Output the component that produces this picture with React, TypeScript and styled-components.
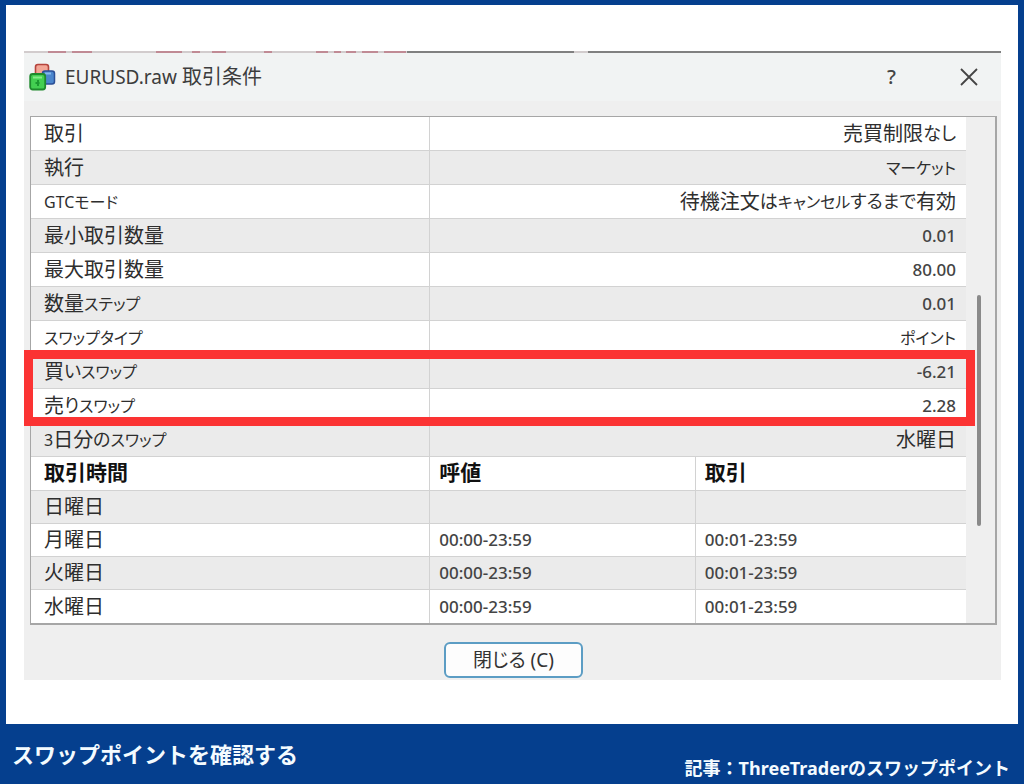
import React from "react";
import styled, { createGlobalStyle } from "styled-components";

const GlobalStyle = createGlobalStyle`
  *, *::before, *::after { box-sizing: border-box; }
  body { margin: 0; background: #053f8e; }
`;

const uiFont = `"Noto Sans", "Noto Sans CJK JP", sans-serif`;

const Page = styled.div`
  display: flex;
  flex-direction: column;
  min-height: 100vh;
  padding: 5px 6px 0;
  background: #053f8e;
  font-family: ${uiFont};
`;

const Sheet = styled.main`
  flex: 1;
  padding: 46px 17px 44px 18px;
  background: #fff;
`;

const Dialog = styled.section`
  display: flex;
  flex-direction: column;
  background: #efefef;
`;

const EdgeLine = styled.svg`
  display: block;
  width: 100%;
  height: 2px;
`;

const TitleBar = styled.header`
  display: flex;
  align-items: center;
  gap: 9px;
  height: 48px;
  padding: 0 14px 0 5px;
  background: #f1f3f3;
`;

const Title = styled.h1`
  flex: 1;
  margin: 0;
  font-size: 20px;
  font-weight: 400;
  line-height: 28px;
  color: #3c3c3c;
`;

const TitleSymbol = styled.span`
  font-size: 19px;
`;

const TitleActions = styled.div`
  display: flex;
  gap: 40px;
`;

const TitleButton = styled.button`
  display: grid;
  place-items: center;
  width: 37px;
  height: 36px;
  padding: 0;
  border: 0;
  background: none;
  color: #444;
  font: 500 20px/28px ${uiFont};
`;

const Pane = styled.div`
  position: relative;
  display: flex;
  margin: 15px 4px 0 6px;
  border: 1px solid #a6a6a6;
  border-right-width: 2px;
  border-bottom-width: 2px;
`;

const ConditionTable = styled.table`
  flex: 1;
  border-collapse: separate;
  border-spacing: 0;
  table-layout: fixed;
  background: #fff;
  font-size: 20px;
  line-height: 28px;
  color: #2e2e2e;
`;

const Row = styled.tr<{ $shaded?: boolean; $compact?: boolean }>`
  height: ${(p) => (p.$compact ? 33 : 34)}px;
  background: ${(p) => (p.$shaded ? "#ebebeb" : "#fff")};

  &:not(:last-child) > * {
    border-bottom: 1px solid #d2d2d2;
  }
`;

const Label = styled.th<{ $heading?: boolean }>`
  padding: 0 8px ${(p) => (p.$heading ? 4 : 0)}px 13px;
  text-align: left;
  white-space: nowrap;
  font-size: ${(p) => (p.$heading ? 21 : 20)}px;
  font-weight: ${(p) => (p.$heading ? 700 : 400)};
  color: ${(p) => (p.$heading ? "#111" : "inherit")};
  font-feature-settings: "palt";
`;

const Cell = styled.td<{ $align?: "left" | "right" }>`
  padding: 0 10px 0 9px;
  border-left: 1px solid #d2d2d2;
  text-align: ${(p) => p.$align ?? "left"};
  white-space: nowrap;
  font-feature-settings: "palt";
`;

const HeadingCell = styled(Label)`
  padding-left: 9px;
  border-left: 1px solid #d2d2d2;
`;

const Kana = styled.span<{ $hiragana?: boolean }>`
  font-size: ${(p) => (p.$hiragana ? 18 : 16)}px;
  line-height: 20px;
  vertical-align: 1px;
`;

const Numeric = styled.span`
  font-size: 17px;
  line-height: 20px;
  font-weight: 500;
  vertical-align: 1px;
  color: #444;
`;

const ScrollTrack = styled.div`
  width: 29px;
  padding: 178px 0 97px 11px;
  background: #efefef;
`;

const ScrollThumb = styled.div`
  width: 4px;
  height: 100%;
  border-radius: 2px;
  background: #8a8a8a;
`;

const Highlight = styled.div`
  position: absolute;
  top: 233px;
  left: -7px;
  right: 20px;
  height: 76px;
  border: 9px solid #fb3333;
  pointer-events: none;
`;

const Actions = styled.div`
  display: flex;
  justify-content: center;
  padding: 17px 0 2px 2px;
`;

const CloseButton = styled.button`
  width: 139px;
  height: 36px;
  padding: 0;
  border: 2px solid #5c9dc4;
  border-radius: 6px;
  background: #fdfdfd;
  color: #333;
  font: 400 19px/28px ${uiFont};
  font-feature-settings: "palt";
`;

const Caption = styled.footer`
  display: flex;
  justify-content: space-between;
  align-items: flex-start;
  height: 60px;
  padding: 0 8px 0 6px;
  color: #f4fbff;
  font-weight: 700;
`;

const CaptionTitle = styled.h2`
  margin: 0;
  padding-top: 14px;
  font-size: 22px;
  line-height: 32px;
`;

const CaptionSource = styled.p`
  margin: 0;
  padding-top: 30px;
  font-size: 18px;
  line-height: 28px;
`;

const SymbolIcon = () => (
  <svg width="27" height="28" viewBox="0 0 27 28" aria-hidden="true">
    <rect x="6.5" y="1.5" width="13" height="11" rx="2.5" fill="#f3a696" stroke="#b5443d" strokeWidth="1.6" />
    <rect x="13.5" y="8" width="12" height="13" rx="2.5" fill="#4b86cd" stroke="#2b4f96" strokeWidth="1.5" />
    <path d="M16 10.500h6" fill="none" stroke="#86b9ee" strokeWidth="2" />
    <rect x="1.2" y="11" width="15" height="15.5" rx="2.5" fill="#43cf51" stroke="#1f8a2d" strokeWidth="1.8" />
    <path d="M4 14.500h9" fill="none" stroke="#84ec88" strokeWidth="2" />
    <path d="M9 17v6M6.500 20h4" fill="none" stroke="#1d9a31" strokeWidth="2" />
  </svg>
);

const CrossIcon = () => (
  <svg width="18" height="18" viewBox="0 0 18 18" fill="none" stroke="currentColor" strokeWidth="1.8" aria-hidden="true">
    <path d="M1 1L17 17M17 1L1 17" />
  </svg>
);

const redDashes = [[24, 18], [48, 20], [132, 26], [168, 8], [188, 14], [240, 8], [292, 12], [310, 7], [322, 10], [338, 16], [360, 22]];

const DialogEdge = () => (
  <EdgeLine viewBox="0 0 977 2" preserveAspectRatio="none" aria-hidden="true">
    <rect width="977" height="2" fill="#d2cccd" />
    {redDashes.map(([x, w]) => (
      <rect key={x} x={x} width={w} height="2" fill="#c08a94" />
    ))}
    <rect x="383" width="167" height="2" fill="#808080" />
    <rect x="564" width="413" height="2" fill="#808080" />
  </EdgeLine>
);

type Kind = "text" | "kana" | "number";
type Condition = { label: string; labelKind?: Kind; value: string; kind?: Kind };

const conditions: Condition[] = [
  { label: "取引", value: "売買制限なし" },
  { label: "執行", value: "マーケット", kind: "kana" },
  { label: "GTCモード", labelKind: "kana", value: "待機注文はキャンセルするまで有効" },
  { label: "最小取引数量", value: "0.01", kind: "number" },
  { label: "最大取引数量", value: "80.00", kind: "number" },
  { label: "数量ステップ", value: "0.01", kind: "number" },
  { label: "スワップタイプ", labelKind: "kana", value: "ポイント", kind: "kana" },
  { label: "買いスワップ", value: "-6.21", kind: "number" },
  { label: "売りスワップ", value: "2.28", kind: "number" },
  { label: "3日分のスワップ", value: "水曜日" },
];

const sessions = [
  { day: "日曜日", quote: "", trade: "" },
  { day: "月曜日", quote: "00:00-23:59", trade: "00:01-23:59" },
  { day: "火曜日", quote: "00:00-23:59", trade: "00:01-23:59" },
  { day: "水曜日", quote: "00:00-23:59", trade: "00:01-23:59" },
];

/* Sets kana runs and digits in smaller sizes next to full-size kanji. */
const Mixed = ({ text }: { text: string }) => (
  <>
    {text.split(/([ァ-ヶー]+|[ぁ-ん]+|[0-9]+)/).map((part, i) =>
      i % 2 ? (
        <Kana key={i} $hiragana={/[ぁ-ん]/.test(part)}>
          {part}
        </Kana>
      ) : (
        part
      )
    )}
  </>
);

const Value = ({ text, kind = "text" }: { text: string; kind?: Kind }) => {
  if (kind === "number") return <Numeric>{text}</Numeric>;
  if (kind === "kana") return <Kana>{text}</Kana>;
  return <Mixed text={text} />;
};

export default function App() {
  return (
    <>
      <GlobalStyle />
      <Page lang="ja">
        <Sheet>
          <Dialog role="dialog" aria-labelledby="dialog-title">
            <DialogEdge />
            <TitleBar>
              <SymbolIcon />
              <Title id="dialog-title">
                <TitleSymbol>EURUSD.raw</TitleSymbol> 取引条件
              </Title>
              <TitleActions>
                <TitleButton type="button">?</TitleButton>
                <TitleButton type="button" aria-label="閉じる">
                  <CrossIcon />
                </TitleButton>
              </TitleActions>
            </TitleBar>
            <Pane>
              <ConditionTable>
                <colgroup>
                  <col style={{ width: "42.6%" }} />
                  <col style={{ width: "28.4%" }} />
                  <col />
                </colgroup>
                <tbody>
                  {conditions.map((c, i) => (
                    <Row key={c.label} $shaded={i % 2 === 1}>
                      <Label scope="row">
                        <Value text={c.label} kind={c.labelKind} />
                      </Label>
                      <Cell colSpan={2} $align="right">
                        <Value text={c.value} kind={c.kind} />
                      </Cell>
                    </Row>
                  ))}
                  <Row>
                    <Label scope="col" $heading>取引時間</Label>
                    <HeadingCell scope="col" $heading>呼値</HeadingCell>
                    <HeadingCell scope="col" $heading>取引</HeadingCell>
                  </Row>
                  {sessions.map((s, i) => (
                    <Row key={s.day} $compact $shaded={i % 2 === 0}>
                      <Label scope="row">{s.day}</Label>
                      <Cell><Numeric>{s.quote}</Numeric></Cell>
                      <Cell><Numeric>{s.trade}</Numeric></Cell>
                    </Row>
                  ))}
                </tbody>
              </ConditionTable>
              <ScrollTrack>
                <ScrollThumb />
              </ScrollTrack>
              <Highlight />
            </Pane>
            <Actions>
              <CloseButton type="button">閉じる (C)</CloseButton>
            </Actions>
          </Dialog>
        </Sheet>
        <Caption>
          <CaptionTitle>スワップポイントを確認する</CaptionTitle>
          <CaptionSource>記事：ThreeTraderのスワップポイント</CaptionSource>
        </Caption>
      </Page>
    </>
  );
}
